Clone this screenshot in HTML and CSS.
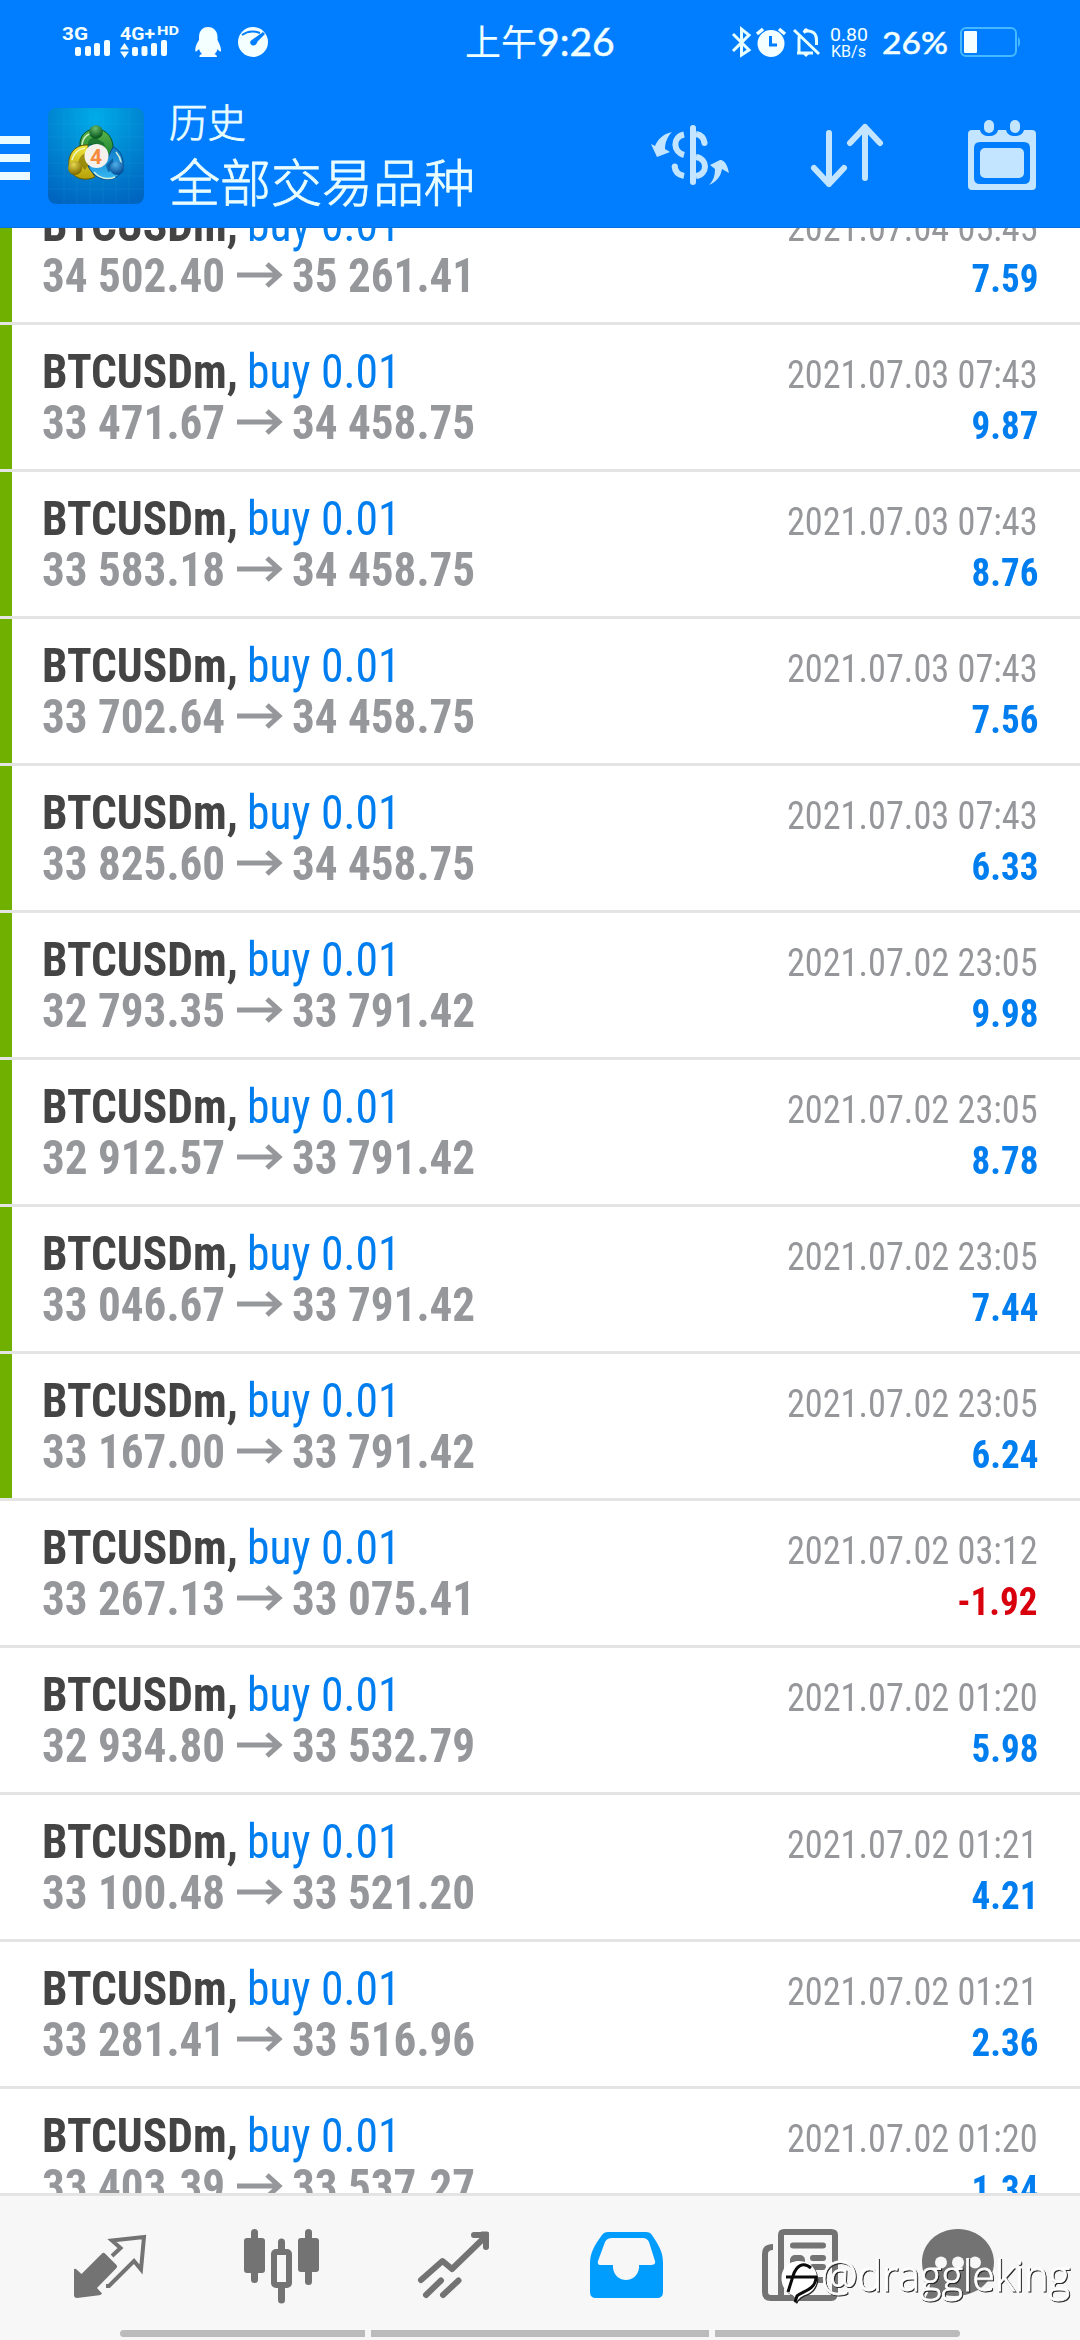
FILE: index.html
```html
<!DOCTYPE html>
<html lang="zh-CN">
<head>
<meta charset="utf-8">
<title>历史</title>
<link rel="stylesheet" href="styles.css">
</head>
<body>
<div class="screen">
  <header class="header">
    <div class="status">
      <svg class="status-left" width="300" height="76" viewBox="0 0 300 76" fill="#f4ffff">
        <text class="net" x="62" y="40" textLength="26" lengthAdjust="spacingAndGlyphs">3G</text>
        <rect x="75" y="47" width="6" height="9" rx="2"/><rect x="85" y="46" width="6" height="10" rx="2"/><rect x="94" y="43" width="6" height="13" rx="2"/><rect x="104" y="40" width="6" height="16" rx="2"/>
        <text class="net" x="120" y="40" textLength="35" lengthAdjust="spacingAndGlyphs">4G+</text>
        <text class="hd" x="157" y="35" textLength="22" lengthAdjust="spacingAndGlyphs">HD</text>
        <path d="M120 49.500L124.500 43L129 49.500ZM120 51.500H129L124.500 58Z"/>
        <rect x="132" y="47" width="6" height="9" rx="2"/><rect x="141.500" y="46" width="6" height="10" rx="2"/><rect x="151" y="43" width="6" height="13" rx="2"/><rect x="161" y="40" width="6" height="16" rx="2"/>
        <path d="M208 27C202 27 199 31.500 199 37V40C197 43 194.500 48 195.500 51.500C196.500 52 198 50 199 49C199.500 51 201 53 202 54C200 54.500 199 55.500 199.500 57H217C217 55.500 216 54.500 214.500 54C216 53 217 51 217.500 49C218.500 50.500 220 52 221 51.500C221.500 48 219 43 217.500 40V37C217.500 31.500 214 27 208 27Z"/>
        <circle cx="253" cy="42" r="15"/>
        <path d="M242 35Q250 29 260 33" fill="none" stroke="#007eff" stroke-width="2"/>
        <path d="M263 32L251 40.500C249 43 251 46 254 45.500C256 45 257 43 257.500 41.500L265 34Z" fill="#007eff"/>
      </svg>
      <div class="clock">上午<span>9:26</span></div>
      <svg class="status-right" width="360" height="76" viewBox="720 0 360 76" fill="#f4ffff">
        <path d="M733 34L749 50L741.500 55V29L749 35L733 51" fill="none" stroke="#e6ffff" stroke-width="3"/>
        <circle cx="771" cy="43.500" r="13.500"/>
        <path d="M757 34L763 29M785 34L779 29" stroke="#f4ffff" stroke-width="3.500"/>
        <path d="M770.500 36V45H777" fill="none" stroke="#007eff" stroke-width="3"/>
        <path d="M794 30L819 54M797 53H813M799 53V39C799 37 799.500 36 800 35M803.500 32.500C806 30.500 811 30.500 814 33C817 36 816.500 39 816.500 45" fill="none" stroke="#e6ffff" stroke-width="3"/>
        <path d="M803 32C804 27 808 27 809 32ZM803 54H809L806 57Z"/>
        <text class="rate" x="830" y="41" textLength="38" lengthAdjust="spacingAndGlyphs">0.80</text>
        <text class="rate rate-unit" x="831" y="57" textLength="35" lengthAdjust="spacingAndGlyphs">KB/s</text>
        <text class="percent" x="882" y="54" textLength="66" lengthAdjust="spacingAndGlyphs">26%</text>
        <rect x="961" y="28" width="55" height="28" rx="5" fill="none" stroke="#45b8ff" stroke-width="2"/>
        <rect x="964" y="31" width="13" height="22" rx="1"/>
        <path d="M1018 37Q1020 38 1020 42T1018 47Z" fill="#45b8ff"/>
      </svg>
    </div>
    <div class="toolbar">
      <div class="menu"><i></i><i></i><i></i></div>
      <svg class="app-icon" width="96" height="96" viewBox="0 0 96 96">
        <defs>
          <radialGradient id="sky" cx=".5" cy=".1" r=".95"><stop offset="0" stop-color="#00acea"/><stop offset=".5" stop-color="#0086d2"/><stop offset="1" stop-color="#0065c0"/></radialGradient>
          <linearGradient id="green" x2="0" y2="1"><stop stop-color="#5cb54a"/><stop offset="1" stop-color="#0d7a30"/></linearGradient>
          <linearGradient id="gold" x2="0" y2="1"><stop stop-color="#f1e63c"/><stop offset="1" stop-color="#b6a008"/></linearGradient>
          <linearGradient id="blue" x2="0" y2="1"><stop stop-color="#0f78c6"/><stop offset="1" stop-color="#36b9f4"/></linearGradient>
          <radialGradient id="greenBall" cx=".45" cy=".25" r=".7"><stop stop-color="#6cbd6c"/><stop offset="1" stop-color="#06551f"/></radialGradient>
          <radialGradient id="goldBall" cx=".4" cy=".25" r=".7"><stop stop-color="#e6d84e"/><stop offset="1" stop-color="#836e00"/></radialGradient>
          <radialGradient id="blueBall" cx=".4" cy=".25" r=".7"><stop stop-color="#4fb0ea"/><stop offset="1" stop-color="#064f98"/></radialGradient>
        </defs>
        <rect width="96" height="96" rx="8" fill="url(#sky)"/>
        <path d="M16 0V96M29 0V96M42 0V96M55 0V96M68 0V96M81 0V96M0 16H96M0 29H96M0 42H96M0 55H96M0 68H96M0 81H96" stroke="#43c5f5" stroke-opacity=".1"/>
        <path d="M32 38C31 28 38 21 48 21C59 21 66 31 65 42C65 48 61 52 57 54L48 36Z" fill="url(#green)" stroke="#07541f"/>
        <path d="M40 37C24 36 18 51 22 62C27 72 39 73 47 69L40 57Z" fill="url(#gold)" stroke="#655a00"/>
        <path d="M65 39C76 43 78 60 71 67C61 76 46 71 40 58L56 57Z" fill="url(#blue)" stroke="#06498a"/>
        <path d="M40 36C40 31 44 29 48 30L56 35L58 44Z" fill="#0a5e2a" opacity=".6"/>
        <path d="M30 55C31 50 34 46 38 45L41 56L37 62Z" fill="#756800" opacity=".6"/>
        <path d="M58 57L65 50L66 62L60 64Z" fill="#064d8e" opacity=".7"/>
        <path d="M34 37C35 28 41 25 46 25M24 52C26 44 31 41 37 40M68 44C74 51 74 58 72 62M46 64C52 71 61 72 67 69" fill="none" stroke="#eefbd8" stroke-width="1.500" opacity=".85"/>
        <circle cx="48" cy="24" r="6.800" fill="url(#greenBall)"/><circle cx="27" cy="60" r="7" fill="url(#goldBall)"/><circle cx="69" cy="60" r="7" fill="url(#blueBall)"/>
        <circle cx="48.500" cy="48" r="12" fill="#f4f1ed"/>
        <text x="48" y="56" text-anchor="middle" class="four">4</text>
      </svg>
      <div class="titles"><div class="title">历史</div><div class="subtitle">全部交易品种</div></div>
      <div class="actions">
        <svg width="80" height="62" viewBox="650 123 80 62">
          <path d="M672 131C663 133 658 138 655 145L651 143L657 156L670 151L665 148C665 141 668 135 672 131ZM709 184C718 180 721 174 722 168L729 172L728 168C726 161 723 159 720 159L710 164L715 168C715 175 713 180 709 184Z" fill="#c4e5ff"/>
          <path d="M693 127V181" stroke="#c4e5ff" stroke-width="6" stroke-linecap="round"/>
          <path d="M684 133.500C672 136 673 151 684 154M674.500 165C675 171 679 174 684 175M696 133C702 134 704 138 704.500 142M696 156C708 158 708 173 696 175" fill="none" stroke="#c4e5ff" stroke-width="6"/>
          <circle cx="704.500" cy="142" r="3" fill="#c4e5ff"/><circle cx="674.800" cy="165.500" r="3" fill="#c4e5ff"/>
        </svg>
        <svg class="sort" width="74" height="66" viewBox="809 122 74 66">
          <path d="M828 133V184M813 168L828 184L843 168M864 178V127M849 143L864 127L879 143" fill="none" stroke="#c4e5ff" stroke-width="6" stroke-linecap="round" stroke-linejoin="round"/>
        </svg>
        <svg width="68" height="70" viewBox="968 120 68 70">
          <path fill-rule="evenodd" fill="#c4e5ff" d="M972 130H980C981 134 984 136 989 136C994 136 997 134 998 130H1006C1007 134 1010 136 1015 136C1020 136 1023 134 1024 130H1032Q1036 130 1036 134V186Q1036 190 1032 190H972Q968 190 968 186V134Q968 130 972 130ZM980 142Q974 142 974 148V178Q974 184 980 184H1024Q1030 184 1030 178V148Q1030 142 1024 142Z"/>
          <rect x="980" y="148" width="44" height="30" rx="5" fill="#c4e5ff"/><rect x="984" y="120" width="10" height="13" rx="5" fill="#c4e5ff"/><rect x="1010" y="120" width="10" height="13" rx="5" fill="#c4e5ff"/>
        </svg>
      </div>
    </div>
  </header>
  <main class="list" id="list"></main>
  <nav class="tabs">
    <svg width="74" height="64" viewBox="73 2234 74 64" fill="#737373">
      <path d="M102 2253.500Q103.500 2252 105 2253.500L116.500 2265Q117.500 2266.500 116.500 2268L97 2288L102 2293.500Q101 2295 99 2295.200L77 2298Q74 2298 74 2295V2270Q74 2268 76 2269L81.500 2274Z"/>
      <path d="M112 2256L120.500 2248L112 2240.500L144 2237L141 2269.500L134 2261L109 2286H106" fill="none" stroke="#737373" stroke-width="4"/>
    </svg>
    <svg class="quotes" width="76" height="75" viewBox="244 2229 76 75" fill="#737373">
      <rect x="251" y="2229" width="7" height="54" rx="3.500"/><rect x="244" y="2238" width="21" height="35" rx="3"/>
      <rect x="305" y="2229" width="7" height="56" rx="3.500"/><rect x="298" y="2238" width="21" height="34" rx="3"/>
      <path d="M281.500 2242V2251M281.500 2286V2300" stroke="#737373" stroke-width="7" stroke-linecap="round"/>
      <rect x="274" y="2252" width="15" height="33" rx="2" fill="#f7f7f7" stroke="#737373" stroke-width="6"/>
    </svg>
    <svg class="trend" width="72" height="68" viewBox="417 2231 72 68" fill="none" stroke="#737373" stroke-width="6" stroke-linecap="round" stroke-linejoin="round">
      <path d="M421 2280L442.500 2261L452 2269L485 2237"/><path d="M474 2235H486V2247"/><path d="M426 2295L441 2280.500M443 2295L458.500 2280.500"/><path d="M482 2234.500H486.500V2240Z" fill="#737373"/>
    </svg>
    <svg class="inbox" width="74" height="67" viewBox="590 2231 74 67">
      <path fill="#009dff" fill-rule="evenodd" d="M608 2232H646Q650 2232 652 2235C660 2247 663 2253 663 2263V2292Q663 2298 657 2298H596Q590 2298 590 2292V2263C590 2253 594 2246 602 2235Q604 2232 608 2232ZM612 2238Q607 2238 605 2242L598 2261Q597 2265 601 2265H613V2268C615 2284 637 2284 639 2268V2265H651Q656 2265 655 2261L649 2242Q647 2238 643 2238Z"/>
    </svg>
    <svg class="news" width="76" height="73" viewBox="762 2229 76 73" fill="none" stroke="#737373" stroke-width="6">
      <path d="M773 2247Q765 2247 765 2254V2292Q765 2298 771 2298H831Q835 2298 835 2292V2235Q835 2232 831 2232H784Q781 2232 781 2235V2298"/><path d="M793 2245.500H823M813 2258H823M813 2267H823" stroke-linecap="round"/><rect x="793" y="2258" width="9" height="9" rx="2"/><path d="M790 2280H826"/>
    </svg>
    <svg class="chat" width="74" height="73" viewBox="921 2229 74 73">
      <path fill="#737373" d="M958 2229C937 2229 922 2244 922 2262C922 2272 926 2279 930 2283C930 2290 927 2296 923 2301C933 2301 940 2298 944 2295C973 2300 994 2284 994 2262C994 2244 978 2229 958 2229Z"/>
      <g fill="#f7f7f7"><circle cx="941" cy="2262.500" r="6"/><circle cx="958" cy="2262.500" r="6"/><circle cx="975" cy="2262.500" r="6"/></g>
    </svg>
    <div class="gesture"><i></i><i></i><i></i></div>
    <div class="watermark">
      <svg width="38" height="46" viewBox="780 2258 38 46">
        <path d="M795 2303C797 2299 795 2296 790 2294C777 2287 778 2261 799 2261C821 2261 823 2290 805 2295C800 2297 798 2300 795 2303Z" fill="#fff"/>
        <path d="M788 2292L793 2276C796 2266 803 2261 811 2268M786 2277H817M816 2278C815 2290 803 2291 797 2296L795 2302" fill="none" stroke="#0a0a0a" stroke-width="3"/>
      </svg>
      <svg class="mark-text" width="254" height="54" viewBox="820 2255 254 54"><text x="821" y="2291" textLength="249" lengthAdjust="spacingAndGlyphs">@draggleking</text></svg>
    </div>
  </nav>
</div>
<script src="app.js"></script>
</body>
</html>
```
FILE: styles.css
```css
* { box-sizing: border-box; }
body { margin: 0; background: #fff; }
.screen { width: 1080px; height: 2340px; display: flex; flex-direction: column; overflow: hidden; font-family: "Roboto Condensed", Roboto, "Noto Sans CJK SC", sans-serif; }
svg { display: block; flex: none; }
.header { height: 228px; flex: none; background: #007eff; border-bottom: 1px solid #0872dc; }
.status { height: 76px; display: flex; justify-content: space-between; }
.status text { font-family: Roboto, sans-serif; }
.status .net { font-size: 19px; font-weight: 700; }
.status .hd { font-size: 13px; font-weight: 700; }
.status .rate { font-size: 19px; }
.status .rate-unit { font-size: 17px; }
.status .percent { font-family: Lato, sans-serif; font-size: 31px; font-weight: 500; stroke: #f4ffff; stroke-width: .4px; }
.clock { width: 160px; margin-left: 70px; padding-top: 16px; display: flex; color: #f0ffff; font-family: "Noto Sans CJK SC", sans-serif; font-size: 36px; line-height: 48px; white-space: nowrap; }
.clock span { font-family: Lato, sans-serif; font-size: 39px; line-height: 50px; -webkit-text-stroke: .5px #f0ffff; }
.toolbar { height: 151px; display: flex; align-items: flex-start; padding-top: 32px; }
.menu { width: 30px; margin: 28px 18px 0 0; display: grid; gap: 10px; }
.menu i { height: 8px; background: #e9fbff; }
.four { font: 700 21px Roboto, sans-serif; fill: #f58a3c; }
.titles { margin-left: 25px; width: 319px; color: #e9fdff; font-family: "Noto Sans CJK SC", sans-serif; font-weight: 300; white-space: nowrap; -webkit-text-stroke: .8px #e9fdff; }
.title { font-size: 38.500px; line-height: 48px; margin-top: -12px; }
.subtitle { font-size: 51px; line-height: 60px; margin-top: 6px; }
.actions { flex: 1; display: flex; align-items: center; justify-content: space-between; height: 96px; padding: 0 44px 2px 162px; }
.sort { margin-right: 4px; }
.list { height: 1965px; flex: none; overflow: hidden; display: flex; flex-direction: column; }
.row { height: 147px; flex: none; border-bottom: 3px solid #e4e4e4; padding: 0 42px; display: flex; justify-content: space-between; }
.row:first-child { margin-top: -50px; }
.row.win { box-shadow: inset 12px 0 #70b000; }
.left, .right { padding-top: 21px; font-stretch: 75%; white-space: pre; }
.right { padding-top: 22px; display: flex; flex-direction: column; align-items: flex-end; }
.name, .prices { font-size: 48px; line-height: 51px; height: 51px; font-weight: 700; color: #444; display: flex; }
.name span, .name b, .prices span { flex: none; transform: scaleX(.94); transform-origin: left; }
.name span { width: 205px; transform: scaleX(.947); }
.name b { font-weight: 400; color: #007eef; transform: scaleX(.95); }
.prices { color: #96979b; align-items: center; }
.prices span:first-child { width: 195px; }
.prices svg { margin: 0 9px 0 0; }
.time, .profit { font-size: 39px; line-height: 51px; height: 51px; color: #96979b; padding-top: 3px; transform: scaleX(.93); transform-origin: right; }
.profit { font-weight: 700; color: #007eef; transform: scaleX(.95); }
.profit.loss { color: #d9000d; }
.tabs { position: relative; flex: 1; background: #f7f7f7; border-top: 3px solid #e4e4e4; display: flex; align-items: flex-start; padding: 33px 0 0 73px; }
.tabs > svg:first-child { margin-top: 5px; }
.quotes, .trend { margin-left: 97px; }
.inbox { margin-left: 101px; }
.news { margin-left: 98px; }
.chat { margin-left: 83px; }
.trend, .inbox { margin-top: 2px; }
.gesture { position: absolute; left: 120px; top: 134px; width: 840px; display: grid; grid-template-columns: 245px 338px 245px; gap: 6px; }
.gesture i { height: 7px; background: #bbb; }
.gesture i:first-child { border-radius: 4px 0 0 4px; }
.gesture i:last-child { border-radius: 0 4px 4px 0; }
.watermark { position: absolute; left: 780px; top: 62px; display: flex; gap: 2px; filter: drop-shadow(1.5px 1.5px 0 #222); }
.mark-text { margin-top: -3px; }
.mark-text text { font: 300 43px "Open Sans", "Noto Sans", sans-serif; fill: #fff; stroke: #fff; stroke-width: .8px; }
```
FILE: app.js
```js
const trades = [
  ["34 502.40", "35 261.41", "2021.07.04 05:45", "7.59", 1],
  ["33 471.67", "34 458.75", "2021.07.03 07:43", "9.87", 1],
  ["33 583.18", "34 458.75", "2021.07.03 07:43", "8.76", 1],
  ["33 702.64", "34 458.75", "2021.07.03 07:43", "7.56", 1],
  ["33 825.60", "34 458.75", "2021.07.03 07:43", "6.33", 1],
  ["32 793.35", "33 791.42", "2021.07.02 23:05", "9.98", 1],
  ["32 912.57", "33 791.42", "2021.07.02 23:05", "8.78", 1],
  ["33 046.67", "33 791.42", "2021.07.02 23:05", "7.44", 1],
  ["33 167.00", "33 791.42", "2021.07.02 23:05", "6.24", 1],
  ["33 267.13", "33 075.41", "2021.07.02 03:12", "-1.92", 0],
  ["32 934.80", "33 532.79", "2021.07.02 01:20", "5.98", 0],
  ["33 100.48", "33 521.20", "2021.07.02 01:21", "4.21", 0],
  ["33 281.41", "33 516.96", "2021.07.02 01:21", "2.36", 0],
  ["33 403.39", "33 537.27", "2021.07.02 01:20", "1.34", 0]
];
const arrow = '<svg width="46" height="28" viewBox="0 0 46 28"><path d="M0 13H42M30 2L42 13L30 24" fill="none" stroke="#96979b" stroke-width="5"/></svg>';
document.getElementById("list").innerHTML = trades.map(([open, close, time, profit, win]) => `
<div class="row${win ? " win" : ""}">
  <div class="left"><div class="name"><span>BTCUSDm,</span><b>buy 0.01</b></div><div class="prices"><span>${open}</span>${arrow}<span>${close}</span></div></div>
  <div class="right"><div class="time">${time}</div><div class="profit${profit[0] === "-" ? " loss" : ""}">${profit}</div></div>
</div>`.replace(/\n\s*/g, "")).join("");
```
